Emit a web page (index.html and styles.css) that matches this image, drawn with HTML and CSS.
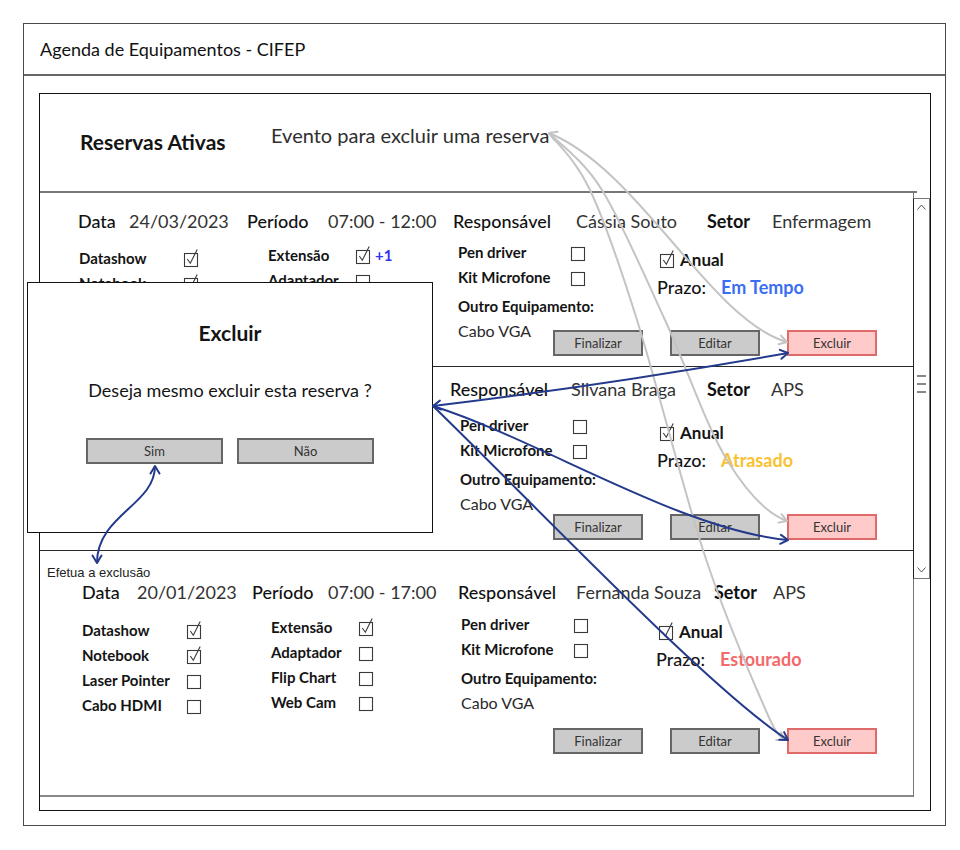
FILE: index.html
```html
<!DOCTYPE html>
<html lang="pt-BR">
<head>
<meta charset="utf-8">
<title>Agenda de Equipamentos - CIFEP</title>
<link rel="stylesheet" href="styles.css">
</head>
<body>
<svg class="defs" width="0" height="0" aria-hidden="true">
  <symbol id="cb-on" viewBox="0 0 16 20">
    <rect x="1.5" y="5.5" width="13" height="13" fill="none" stroke="#3a3a3a" stroke-width="1.1"/>
    <path d="M4.3,11 L7.3,15.2 L14.2,1.6" fill="none" stroke="#3a3a3a" stroke-width="1.1"/>
  </symbol>
  <symbol id="cb-off" viewBox="0 0 16 20">
    <rect x="1.5" y="5.5" width="13" height="13" fill="none" stroke="#3a3a3a" stroke-width="1.1"/>
  </symbol>
</svg>

<div class="window">
  <div class="titlebar">Agenda de Equipamentos - CIFEP</div>
  <div class="panel">
    <header class="panel-head">
      <h1 class="panel-title">Reservas Ativas</h1>
      <p class="note">Evento para excluir uma reserva</p>
    </header>
    <div class="list">
      <div class="rows">
        <!-- Row 1 -->
        <section class="row row--1">
          <div class="topline">
            <span class="k">Data</span><span class="v">24/03/2023</span>
            <span class="k">Período</span><span class="v">07:00 - 12:00</span>
            <span class="k">Responsável</span><span class="v">Cássia Souto</span>
            <span class="k k--strong">Setor</span><span class="v">Enfermagem</span>
          </div>
          <div class="body">
            <div class="col col--1">
              <div class="item"><span class="item__label">Datashow</span><svg class="cb"><use href="#cb-on"/></svg></div>
              <div class="item"><span class="item__label">Notebook</span><svg class="cb"><use href="#cb-on"/></svg></div>
              <div class="item"><span class="item__label">Laser Pointer</span><svg class="cb"><use href="#cb-off"/></svg></div>
              <div class="item"><span class="item__label">Cabo HDMI</span><svg class="cb"><use href="#cb-off"/></svg></div>
            </div>
            <div class="col col--2">
              <div class="item"><span class="item__label">Extensão</span><svg class="cb"><use href="#cb-on"/></svg><span class="plus">+1</span></div>
              <div class="item"><span class="item__label">Adaptador</span><svg class="cb"><use href="#cb-off"/></svg></div>
              <div class="item"><span class="item__label">Flip Chart</span><svg class="cb"><use href="#cb-off"/></svg></div>
              <div class="item"><span class="item__label">Web Cam</span><svg class="cb"><use href="#cb-off"/></svg></div>
            </div>
            <div class="col col--3">
              <div class="item"><span class="item__label">Pen driver</span><svg class="cb"><use href="#cb-off"/></svg></div>
              <div class="item"><span class="item__label">Kit Microfone</span><svg class="cb"><use href="#cb-off"/></svg></div>
              <div class="other-title">Outro Equipamento:</div>
              <div class="other-line">
                <span class="other-val">Cabo VGA</span>
                <div class="actions">
                  <span class="btn">Finalizar</span>
                  <span class="btn">Editar</span>
                  <span class="btn btn--danger">Excluir</span>
                </div>
              </div>
            </div>
            <div class="col col--4">
              <div class="anual"><svg class="cb"><use href="#cb-on"/></svg><span>Anual</span></div>
              <div class="prazo"><span class="prazo__k">Prazo:</span><span class="status status--ok">Em Tempo</span></div>
            </div>
          </div>
        </section>

        <!-- Row 2 (left part covered by the dialog) -->
        <section class="row row--2">
          <div class="topline">
            <span class="k">Data</span><span class="v">10/03/2023</span>
            <span class="k">Período</span><span class="v">8:00 - 12:00</span>
            <span class="k">Responsável</span><span class="v">Silvana Braga</span>
            <span class="k k--strong">Setor</span><span class="v">APS</span>
          </div>
          <div class="body">
            <div class="col col--1">
              <div class="item"><span class="item__label">Datashow</span><svg class="cb"><use href="#cb-on"/></svg></div>
              <div class="item"><span class="item__label">Notebook</span><svg class="cb"><use href="#cb-off"/></svg></div>
              <div class="item"><span class="item__label">Laser Pointer</span><svg class="cb"><use href="#cb-off"/></svg></div>
              <div class="item"><span class="item__label">Cabo HDMI</span><svg class="cb"><use href="#cb-on"/></svg></div>
            </div>
            <div class="col col--2">
              <div class="item"><span class="item__label">Extensão</span><svg class="cb"><use href="#cb-on"/></svg></div>
              <div class="item"><span class="item__label">Adaptador</span><svg class="cb"><use href="#cb-off"/></svg></div>
              <div class="item"><span class="item__label">Flip Chart</span><svg class="cb"><use href="#cb-off"/></svg></div>
              <div class="item"><span class="item__label">Web Cam</span><svg class="cb"><use href="#cb-off"/></svg></div>
            </div>
            <div class="col col--3">
              <div class="item"><span class="item__label">Pen driver</span><svg class="cb"><use href="#cb-off"/></svg></div>
              <div class="item"><span class="item__label">Kit Microfone</span><svg class="cb"><use href="#cb-off"/></svg></div>
              <div class="other-title">Outro Equipamento:</div>
              <div class="other-line">
                <span class="other-val">Cabo VGA</span>
                <div class="actions">
                  <span class="btn">Finalizar</span>
                  <span class="btn">Editar</span>
                  <span class="btn btn--danger">Excluir</span>
                </div>
              </div>
            </div>
            <div class="col col--4">
              <div class="anual"><svg class="cb"><use href="#cb-on"/></svg><span>Anual</span></div>
              <div class="prazo"><span class="prazo__k">Prazo:</span><span class="status status--late">Atrasado</span></div>
            </div>
          </div>
        </section>

        <!-- Row 3 -->
        <section class="row row--3">
          <div class="topline">
            <span class="k">Data</span><span class="v">20/01/2023</span>
            <span class="k">Período</span><span class="v">07:00 - 17:00</span>
            <span class="k">Responsável</span><span class="v">Fernanda Souza</span>
            <span class="k k--strong">Setor</span><span class="v">APS</span>
          </div>
          <div class="body">
            <div class="col col--1">
              <div class="item"><span class="item__label">Datashow</span><svg class="cb"><use href="#cb-on"/></svg></div>
              <div class="item"><span class="item__label">Notebook</span><svg class="cb"><use href="#cb-on"/></svg></div>
              <div class="item"><span class="item__label">Laser Pointer</span><svg class="cb"><use href="#cb-off"/></svg></div>
              <div class="item"><span class="item__label">Cabo HDMI</span><svg class="cb"><use href="#cb-off"/></svg></div>
            </div>
            <div class="col col--2">
              <div class="item"><span class="item__label">Extensão</span><svg class="cb"><use href="#cb-on"/></svg></div>
              <div class="item"><span class="item__label">Adaptador</span><svg class="cb"><use href="#cb-off"/></svg></div>
              <div class="item"><span class="item__label">Flip Chart</span><svg class="cb"><use href="#cb-off"/></svg></div>
              <div class="item"><span class="item__label">Web Cam</span><svg class="cb"><use href="#cb-off"/></svg></div>
            </div>
            <div class="col col--3">
              <div class="item"><span class="item__label">Pen driver</span><svg class="cb"><use href="#cb-off"/></svg></div>
              <div class="item"><span class="item__label">Kit Microfone</span><svg class="cb"><use href="#cb-off"/></svg></div>
              <div class="other-title">Outro Equipamento:</div>
              <div class="other-line">
                <span class="other-val">Cabo VGA</span>
                <div class="actions">
                  <span class="btn">Finalizar</span>
                  <span class="btn">Editar</span>
                  <span class="btn btn--danger">Excluir</span>
                </div>
              </div>
            </div>
            <div class="col col--4">
              <div class="anual"><svg class="cb"><use href="#cb-on"/></svg><span>Anual</span></div>
              <div class="prazo"><span class="prazo__k">Prazo:</span><span class="status status--over">Estourado</span></div>
            </div>
          </div>
        </section>
      </div>

      <div class="scrollbar">
        <svg class="caret" width="9" height="6" viewBox="0 0 9 6"><path d="M0.5,5.5 L4.5,1 L8.5,5.5" fill="none" stroke="#555" stroke-width="1"/></svg>
        <div class="thumb"><span></span><span></span><span></span></div>
        <svg class="caret" width="9" height="6" viewBox="0 0 9 6"><path d="M0.5,0.5 L4.5,5 L8.5,0.5" fill="none" stroke="#555" stroke-width="1"/></svg>
      </div>
    </div>
  </div>
</div>

<div class="dialog">
  <h2 class="dialog__title">Excluir</h2>
  <p class="dialog__text">Deseja mesmo excluir esta reserva ?</p>
  <div class="dialog__actions">
    <span class="btn btn--wide">Sim</span>
    <span class="btn btn--wide">Não</span>
  </div>
</div>

<div class="annot">Efetua a exclusão</div>

<svg class="arrows" width="960" height="850" viewBox="0 0 960 850" aria-hidden="true">
  <defs>
    <marker id="mg" viewBox="0 0 12 12" refX="10.5" refY="6" markerWidth="12" markerHeight="12" markerUnits="userSpaceOnUse" orient="auto-start-reverse">
      <path d="M3,1.5 L10.5,6 L3,10.5" fill="none" stroke="#c4c4c4" stroke-width="2" stroke-linecap="round" stroke-linejoin="round"/>
    </marker>
    <marker id="mb" viewBox="0 0 12 12" refX="10.5" refY="6" markerWidth="12" markerHeight="12" markerUnits="userSpaceOnUse" orient="auto-start-reverse">
      <path d="M3,1.5 L10.5,6 L3,10.5" fill="none" stroke="#243a8c" stroke-width="2" stroke-linecap="round" stroke-linejoin="round"/>
    </marker>
  </defs>
  <g fill="none" stroke="#c4c4c4" stroke-width="2">
    <path d="M549,133 C640,170 710,320 787,342" marker-start="url(#mg)" marker-end="url(#mg)"/>
    <path d="M549,133 C557.8,142.5 582.7,158.8 602,190 C621.3,221.2 644.2,275 665,320 C685.8,365 706.5,426.5 727,460 C747.5,493.5 768,514 787,521" marker-end="url(#mg)"/>
    <path d="M549,133 C555.8,142.5 575.3,158.8 590,190 C604.7,221.2 618.2,260 637,320 C655.8,380 683,488.3 703,550 C723,611.7 743.3,658.3 757,690 C770.7,721.7 775,734 785,740" marker-end="url(#mg)"/>
  </g>
  <g fill="none" stroke="#243a8c" stroke-width="2">
    <path d="M433,406 C550,392 680,372 788,353" marker-start="url(#mb)" marker-end="url(#mb)"/>
    <path d="M433,406 C540,440 680,530 788,540" marker-end="url(#mb)"/>
    <path d="M433,406 C530,500 710,690 788,740" marker-end="url(#mb)"/>
    <path d="M155,466 C155,505 97,515 97,563" marker-start="url(#mb)" marker-end="url(#mb)"/>
  </g>
</svg>
</body>
</html>
```
FILE: styles.css
```css
* { box-sizing: border-box; }

body {
  margin: 0;
  width: 960px;
  height: 850px;
  position: relative;
  overflow: hidden;
  background: #fff;
  color: #141414;
  font-family: Lato, "Noto Sans", sans-serif;
}

.defs { position: absolute; width: 0; height: 0; overflow: hidden; }

/* ---------- window ---------- */
.window {
  margin: 23px 0 0 23px;
  width: 923px;
  height: 803px;
  border: 1px solid #4a4a4a;
}

.titlebar {
  height: 52px;
  border-bottom: 2px solid #666;
  padding-left: 16px;
  display: flex;
  align-items: center;
  font-size: 18px;
  color: #111;
}

.panel {
  margin: 17px 0 0 15px;
  width: 892px;
  height: 718px;
  border: 1px solid #111;
}

.panel-head {
  width: 877px;
  height: 99px;
  border-bottom: 2px solid #777;
  display: flex;
  align-items: flex-start;
  padding: 29px 0 0 40px;
}

.panel-title {
  margin: 6px 0 0;
  width: 191px;
  flex: none;
  font-size: 21px;
  font-weight: 700;
  line-height: 26px;
}

.note {
  margin: 0;
  font-size: 20px;
  line-height: 24px;
  color: #2e2e2e;
}

/* ---------- list ---------- */
.list {
  display: flex;
  align-items: flex-start;
}

.rows {
  width: 874px;
  flex: none;
  border-right: 1px solid #777;
}

.row {
  height: var(--h);
  padding: var(--pt) 0 0 var(--pl);
  border-bottom: 1px solid #2a2a2a;
}

.row--1 {
  --h: 174px; --pt: 16px; --pl: 38px; --gap: 6px; --bml: 1px; --act: 11px; --cabo: 95px;
  --top: 51px 118px 81px 125px 123px 131px 65px auto;
  --cols: 189px 190px 199px 1fr;
}
.row--2 {
  --h: 184px; --pt: 10px; --pl: 38px; --gap: 11px; --bml: 1px; --act: 22px; --cabo: 93px;
  --top: 51px 118px 81px 122px 121px 136px 64px auto;
  --cols: 190px 191px 197px 1fr;
}
.row--3 {
  --h: 246px; --pt: 29px; --pl: 42px; --gap: 7px; --bml: 0px; --act: 37px; --cabo: 92px;
  --top: 55px 115px 76px 130px 118px 138px 59px auto;
  --cols: 189px 190px 195px 1fr;
  border-bottom: 2px solid #888;
}

.topline {
  display: grid;
  grid-template-columns: var(--top);
  font-size: 18px;
  line-height: 24px;
  white-space: nowrap;
}
.topline .k { color: #111; font-weight: 500; }
.topline .k--strong { font-weight: 700; }
.topline .v { color: #333; }

.body {
  display: grid;
  grid-template-columns: var(--cols);
  margin: var(--gap) 0 0 var(--bml);
}

.col--1 { margin-top: 6px; --lw: 104px; }
.col--2 { margin-top: 3px; --lw: 87px; }
.col--3 { --lw: 112px; }
.col--4 { margin-top: 8px; }

.item {
  display: flex;
  align-items: center;
  height: 25px;
  font-size: 15px;
  font-weight: 700;
  white-space: nowrap;
}
.item__label { width: var(--lw); flex: none; }

.cb { width: 16px; height: 20px; flex: none; display: block; }

.plus {
  margin-left: 4px;
  color: #3434ee;
  font-size: 15px;
  font-weight: 700;
}

.other-title {
  margin-top: 5px;
  font-size: 15px;
  font-weight: 700;
  line-height: 25px;
  white-space: nowrap;
}

.other-line {
  display: flex;
  align-items: flex-start;
}
.other-val {
  width: var(--cabo);
  flex: none;
  font-size: 16px;
  line-height: 24px;
  color: #2a2a2a;
}

.actions {
  display: flex;
  flex: none;
  gap: 27px;
  margin-top: var(--act);
}

.btn {
  width: 90px;
  height: 26px;
  flex: none;
  display: flex;
  align-items: center;
  justify-content: center;
  border: 2px solid #666;
  background: #cbcbcb;
  font-size: 13px;
  color: #333;
}
.btn--danger {
  background: #ffcaca;
  border-color: #e06a6a;
}
.btn--wide { width: 137px; }

.anual {
  display: flex;
  align-items: center;
  gap: 5px;
  height: 24px;
  margin-left: 2px;
  font-size: 17px;
  font-weight: 700;
}

.prazo {
  display: flex;
  margin-top: 4px;
  font-size: 18px;
  line-height: 24px;
  white-space: nowrap;
}
.prazo__k { width: 64px; flex: none; font-weight: 500; }
.status { font-weight: 700; }
.status--ok { color: #3c6ef4; }
.status--late { color: #f9c232; }
.status--over { color: #f26a6a; }

/* ---------- scrollbar ---------- */
.scrollbar {
  width: 17px;
  height: 381px;
  flex: none;
  margin: 5px 0 0 -1px;
  border: 1px solid #777;
  border-left-color: #222;
  display: flex;
  flex-direction: column;
  align-items: center;
  justify-content: space-between;
  padding: 5px 0 5px;
}
.caret { display: block; }
.thumb {
  display: flex;
  flex-direction: column;
  gap: 6px;
  margin-top: -10px;
}
.thumb span {
  display: block;
  width: 9px;
  height: 2px;
  background: #888;
}

/* ---------- dialog (overlay) ---------- */
.dialog {
  position: absolute;
  left: 27px;
  top: 282px;
  width: 406px;
  height: 251px;
  border: 1px solid #111;
  background: #fff;
  z-index: 5;
  display: flex;
  flex-direction: column;
  align-items: center;
  padding-top: 37px;
}
.dialog__title {
  margin: 0;
  font-size: 21px;
  font-weight: 700;
  line-height: 26px;
}
.dialog__text {
  margin: 32px 0 0;
  font-size: 18px;
  line-height: 24px;
}
.dialog__actions {
  display: flex;
  gap: 14px;
  margin-top: 36px;
}

/* ---------- annotations ---------- */
.annot {
  position: absolute;
  left: 47px;
  top: 566px;
  font-family: "Liberation Sans", Arial, sans-serif;
  font-size: 13px;
  line-height: 14px;
  color: #222;
  z-index: 6;
}

.arrows {
  position: absolute;
  left: 0;
  top: 0;
  z-index: 10;
  pointer-events: none;
}
```
